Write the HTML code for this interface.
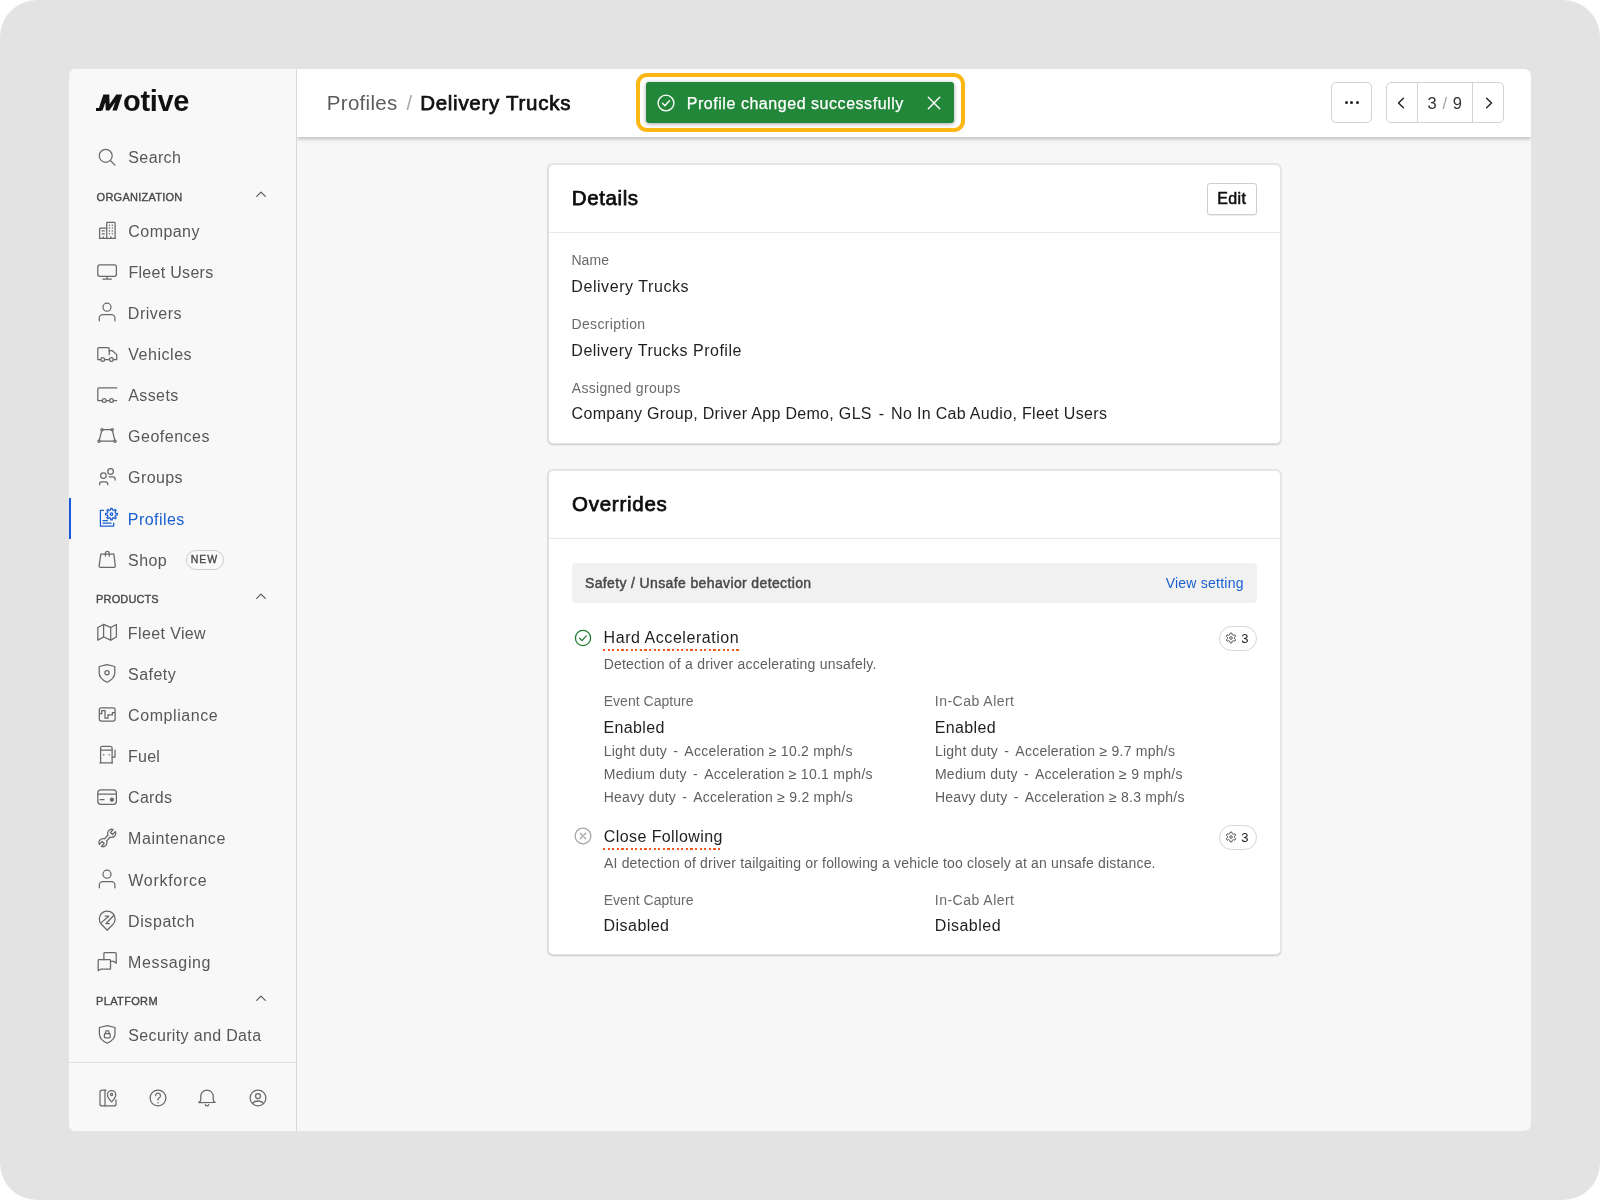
<!DOCTYPE html>
<html lang="en">
<head>
<meta charset="utf-8">
<title>Profiles / Delivery Trucks</title>
<style>
*{box-sizing:border-box;margin:0;padding:0}
html,body{width:1600px;height:1200px;overflow:hidden;background:#fff}
body{font-family:"Liberation Sans",sans-serif;color:#1a1a1a;position:relative}
.outer{position:absolute;left:0;top:0;width:1600px;height:1200px;background:#e3e3e3;border-radius:37px}
.app{position:absolute;left:69px;top:69px;width:1462px;height:1062px;border-radius:7px;overflow:hidden;background:#f7f7f7;will-change:transform}
.sidebar{position:absolute;left:0;top:0;width:228px;height:1062px;background:#f8f8f8;border-right:1px solid #d9d9d9}
.t{position:absolute;white-space:nowrap;line-height:20px;height:20px}
.ws{word-spacing:2px}
.nav{font-size:16px;color:#575757}
.nav.act{color:#1a5fd0}
.sec{font-size:11px;color:#474747;-webkit-text-stroke:.35px #474747}
.newt{font-size:10.5px;color:#474747;-webkit-text-stroke:.35px #474747}
.ic{position:absolute;fill:none;stroke:#686868;stroke-width:1.25;stroke-linecap:round;stroke-linejoin:round}
.ic .dt{stroke-width:1.5}
.chev{position:absolute;width:12px;height:8px;fill:none;stroke:#555;stroke-width:1.15;stroke-linecap:round;stroke-linejoin:round}
.lm{position:absolute;left:-28.6px;top:2.2px;font-size:21.8px;line-height:34px;letter-spacing:0;transform:skewX(-18deg) scaleX(1.15);transform-origin:0 100%;-webkit-text-stroke:1.1px #111}
.foot{position:absolute;left:27.1px;top:38.9px;width:4.5px;height:3px;background:#111}
.logot{font-size:29px;line-height:34px;height:34px;font-weight:700;color:#111}
.actbar{position:absolute;left:0;top:429.3px;width:1.6px;height:41.2px;background:#1659dc}
.newb{position:absolute;left:117px;top:481px;width:38px;height:20px;border:1px solid #cdcdcd;border-radius:10px;background:#fafafa}
.sbhr{position:absolute;left:0;top:993px;width:227px;height:1px;background:#e2e2e2}
.header{position:absolute;left:228px;top:0;width:1234px;height:68px;background:#fff;box-shadow:0 2px 3px rgba(0,0,0,.17),0 3px 6px rgba(0,0,0,.07);clip-path:inset(0 0 -12px 0)}
.bc1{font-size:20.5px;color:#5c5c5c;line-height:24px;height:24px}
.bcs{font-size:20px;color:#a8a8a8;line-height:24px;height:24px}
.bc2{font-size:20.5px;color:#111;-webkit-text-stroke:.75px #111;line-height:24px;height:24px}
.toastring{position:absolute;left:338.5px;top:4.3px;width:329px;height:59.2px;border:4px solid #fdb714;border-radius:11px}
.toast{position:absolute;left:348.6px;top:13px;width:308.8px;height:41px;background:#23873a;border-radius:3px;box-shadow:0 1px 4px rgba(0,0,0,.35)}
.tchk{position:absolute;left:10.5px;top:10.8px;width:20px;height:20px;fill:none;stroke:#fff;stroke-width:1.4;stroke-linecap:round;stroke-linejoin:round}
.ttxt{font-size:16px;color:#fff;-webkit-text-stroke:.25px #fff}
.tx{position:absolute;left:281px;top:13.5px;width:14px;height:14px;fill:none;stroke:#fff;stroke-width:1.6;stroke-linecap:round}
.hbtn{position:absolute;top:13px;height:41.3px;border:1px solid #d2d2d2;border-radius:5px;background:#fff}
.dot3{position:absolute;top:17.8px;width:3px;height:3px;border-radius:50%;background:#222}
.pch{position:absolute;top:12.8px;width:10px;height:14px;fill:none;stroke:#222;stroke-width:1.4;stroke-linecap:round;stroke-linejoin:round}
.pdiv{position:absolute;top:0;width:1px;height:39.3px;background:#d2d2d2}
.pgt{font-size:16.5px;color:#333;text-align:center;letter-spacing:.55px}
.psl{color:#a0a0a0}
.main{position:absolute;left:228px;top:68px;width:1234px;height:994px}
.card{position:absolute;background:#fff;border:1px solid #e3e3e3;border-radius:5px;box-shadow:-.5px -.5px 1px rgba(0,0,0,.07),0 1px 2px rgba(0,0,0,.2)}
.hr{position:absolute;height:1px;background:#e8e8e8}
.h2{font-size:20.5px;color:#0d0d0d;-webkit-text-stroke:.75px #0d0d0d;line-height:24px;height:24px}
.editb{position:absolute;left:910px;top:46px;width:50px;height:32px;border:1px solid #cdcdcd;border-radius:3px;background:#fff;box-shadow:0 1px 1px rgba(0,0,0,.08)}
.edt{font-size:16px;color:#111;-webkit-text-stroke:.55px #111}
.lbl{font-size:14px;color:#6a6a6a}
.val{font-size:16px;color:#1f1f1f}
.sm{font-size:14px;color:#5f5f5f}
.dsc{font-size:14px;color:#5f5f5f}
.b3{font-size:13px;color:#1a1a1a}
.banner{position:absolute;left:274.5px;top:425.5px;width:685.5px;height:40.5px;background:#f1f1f1;border-radius:4px}
.bnt{font-size:14px;color:#484848;-webkit-text-stroke:.45px #484848}
.lnk{font-size:14px;color:#1a5fd0}
.sti{position:absolute;width:20px;height:20px;fill:none;stroke-width:1.3;stroke-linecap:round;stroke-linejoin:round}
.dot{position:absolute;height:2px;margin-top:-1px;background:repeating-linear-gradient(90deg,#f4581f 0,#f4581f 2.2px,transparent 2.2px,transparent 4.6px)}
.badge{position:absolute;left:922px;width:38px;height:24.8px;border:1px solid #d6d6d6;border-radius:13px;background:#fff}
.badge .gear{position:absolute;left:5px;top:5.3px;width:12px;height:12px;fill:none;stroke:#3c3c3c;stroke-width:.85;stroke-linejoin:round}
</style>
</head>
<body>
<div class="outer"></div>
<div class="app">
<div class="sidebar">
<div class="foot"></div>
<svg class="ic" viewBox="0 0 24 24" style="left:26.3px;top:76.1px;width:24px;height:24px;"><circle cx="10.700" cy="10.800" r="6.500"/><path d="M15.400 15.500l4.600 4.600"/></svg>
<svg class="ic" viewBox="0 0 24 24" style="left:26.3px;top:149.6px;width:24px;height:24px;"><path d="M11.700 19.400V4.200a.8.8 0 0 1 .8-.8h6.800a.8.8 0 0 1 .8.800v15.200"/><path d="M4.600 19.400V9.950a.8.8 0 0 1 .8-.8h6.300"/><path d="M4.600 19.400h15.500"/><path class="dt" d="M14.400 6.150h.01M17.300 6.150h.01M14.400 9h.01M17.300 9h.01M14.400 11.900h.01M17.300 11.900h.01M14.400 14.800h.01M17.300 14.800h.01"/><path d="M7.200 11.900h2.100M7.200 14.800h2.100M8.250 17.800v1.600M15.900 17.600v1.800"/></svg>
<svg class="ic" viewBox="0 0 24 24" style="left:26.3px;top:190.7px;width:24px;height:24px;"><rect x="2.800" y="4.900" width="18.600" height="11.400" rx="2"/><path d="M12.100 16.300v2.800M7.900 19.100h8.500"/></svg>
<svg class="ic" viewBox="0 0 24 24" style="left:26.3px;top:231.9px;width:24px;height:24px;"><circle cx="12" cy="6.200" r="4"/><path d="M4.300 19.800v-2.600a3.500 3.500 0 0 1 3.500-3.500h8.600a3.500 3.500 0 0 1 3.500 3.500v2.600"/></svg>
<svg class="ic" viewBox="0 0 24 24" style="left:26.3px;top:273px;width:24px;height:24px;"><path d="M5.800 17.700H2.800V6.700a1.200 1.200 0 0 1 1.200-1.200h9a1.200 1.200 0 0 1 1.200 1.200V12.500"/><path d="M14.200 8.700h3.300l4.200 3.900v5.100h-3.400"/><path d="M9.600 17.700h4.900"/><circle cx="7.700" cy="17.400" r="1.900"/><circle cx="16.400" cy="17.400" r="1.900"/></svg>
<svg class="ic" viewBox="0 0 24 24" style="left:26.3px;top:314.2px;width:24px;height:24px;"><path d="M21.700 4.900H4a1.200 1.200 0 0 0-1.200 1.200V17.500h4.500"/><path d="M11.100 17.500h3.500M18.400 17.500h3.300"/><circle cx="9.200" cy="17.400" r="1.900"/><circle cx="16.500" cy="17.400" r="1.900"/></svg>
<svg class="ic" viewBox="0 0 24 24" style="left:26.3px;top:355.3px;width:24px;height:24px;"><path d="M8.200 5.700h7.800M17.500 6.900l2.200 9.100M18.800 17.200H5.200M4.300 16l2.400-9.100"/><circle cx="7" cy="5.700" r="1.200"/><circle cx="17.200" cy="5.700" r="1.200"/><circle cx="4" cy="17.200" r="1.200"/><circle cx="20" cy="17.200" r="1.200"/></svg>
<svg class="ic" viewBox="0 0 24 24" style="left:26.3px;top:396.4px;width:24px;height:24px;"><circle cx="8.400" cy="10.600" r="2.800"/><path d="M4.600 19.800v-.8a2.200 2.200 0 0 1 2.200-2.200h3.700a2.200 2.200 0 0 1 2.200 2.200v.8"/><circle cx="15.600" cy="6.500" r="2.800"/><path d="M14.200 11.800h3.600a2.400 2.400 0 0 1 2.400 2.400v.9"/></svg>
<svg class="ic" viewBox="0 0 24 24" style="left:26.3px;top:437.6px;width:24px;height:24px;stroke:#1a5fd0;"><path d="M8.400 3.400H5.400V19.100H18.700V16.100"/><path d="M8 13.500h4.400M8 16.200h8"/><path d="M15.52 3.02L15.76 1.25L17.24 1.25L17.48 3.02L18.69 3.52L20.12 2.44L21.16 3.48L20.08 4.91L20.58 6.12L22.35 6.36L22.35 7.84L20.58 8.08L20.08 9.29L21.16 10.72L20.12 11.76L18.69 10.68L17.48 11.18L17.24 12.95L15.76 12.95L15.52 11.18L14.31 10.68L12.88 11.76L11.84 10.72L12.92 9.29L12.42 8.08L10.65 7.84L10.65 6.36L12.42 6.12L12.92 4.91L11.84 3.48L12.88 2.44L14.31 3.52Z"/><circle cx="16.5" cy="7.1" r="1.3"/></svg>
<svg class="ic" viewBox="0 0 24 24" style="left:26.3px;top:478.7px;width:24px;height:24px;"><path d="M6.700 6h11.300a1 1 0 0 1 1 .9l1.300 11.200a1.100 1.100 0 0 1-1.100 1.200H5.200a1.100 1.100 0 0 1-1.100-1.200L5.700 6.900a1 1 0 0 1 1-.9z"/><path d="M10.400 8V5.200a1.900 1.900 0 0 1 3.800 0V8"/></svg>
<svg class="ic" viewBox="0 0 24 24" style="left:26.3px;top:551.85px;width:24px;height:24px;"><path d="M2.800 6.450L8.600 3.450L15.700 6.450L21.400 3.450V16.050L15.700 19.150L8.600 16.050L2.800 19.150Z"/><path d="M8.600 3.450V16.050M15.700 6.450V19.150"/></svg>
<svg class="ic" viewBox="0 0 24 24" style="left:26.3px;top:593px;width:24px;height:24px;"><path d="M12 2.600L19.800 4.500V10.800c0 4.700-3.400 7.500-7.800 9.500c-4.400-2-7.800-4.800-7.800-9.500V4.500Z"/><circle cx="12" cy="10.700" r="2.100"/></svg>
<svg class="ic" viewBox="0 0 24 24" style="left:26.3px;top:634.1px;width:24px;height:24px;"><rect x="4.300" y="4.800" width="15.800" height="13.200" rx="2"/><path d="M4.600 10.600H6.700V7.600H10V15.200H13V11.900H17.400V9.600H20" stroke-linejoin="miter" stroke-linecap="butt"/></svg>
<svg class="ic" viewBox="0 0 24 24" style="left:26.3px;top:675.3px;width:24px;height:24px;"><path d="M5.600 18.800V4.100a1.800 1.800 0 0 1 1.800-1.800h7.900a1.800 1.800 0 0 1 1.800 1.800V18.800"/><path d="M5 18.800h12.400M5.600 6h11.500"/><path d="M17.100 13H20V6"/><path class="dt" d="M8.700 10.700h.01M14.200 10.700h.01"/></svg>
<svg class="ic" viewBox="0 0 24 24" style="left:26.3px;top:716.4px;width:24px;height:24px;"><rect x="2.800" y="4.800" width="18.600" height="14.500" rx="3"/><path d="M2.800 9h18.600M5 14.700h4"/><circle cx="16.900" cy="14.700" r="1.500" style="fill:#6a6a6a"/></svg>
<svg class="ic" viewBox="0 0 24 24" style="left:26.3px;top:757.55px;width:24px;height:24px;"><path d="M13.04 8.01A4.0 4.0 0 0 1 18.15 2.60L15.40 5.55L17.52 7.53L20.27 4.58A4.0 4.0 0 0 1 15.23 10.05L11.56 13.99A4.0 4.0 0 0 1 6.45 19.40L9.20 16.45L7.08 14.47L4.33 17.42A4.0 4.0 0 0 1 9.37 11.95Z"/></svg>
<svg class="ic" viewBox="0 0 24 24" style="left:26.3px;top:798.7px;width:24px;height:24px;"><circle cx="12" cy="6.200" r="4"/><path d="M4.300 19.800v-2.600a3.500 3.500 0 0 1 3.500-3.500h8.600a3.500 3.500 0 0 1 3.500 3.500v2.600"/></svg>
<svg class="ic" viewBox="0 0 24 24" style="left:26.3px;top:839.8px;width:24px;height:24px;"><path d="M12.200 21.200L6.400 15.300A7.900 7.900 0 1 1 18 15.300Z"/><path d="M6 13.900L13.700 7.200H10.200M19 6.200L11 14.500H14.400"/></svg>
<svg class="ic" viewBox="0 0 24 24" style="left:26.3px;top:881px;width:24px;height:24px;"><path d="M8.900 9.700V3.500a.8.8 0 0 1 .8-.8h10.700a.8.8 0 0 1 .8.800V13.300l-2.600-2h-3.100"/><path d="M3.200 20.800V10.500a.8.8 0 0 1 .8-.8h10.700a.8.8 0 0 1 .8.800v7.900a.8.800 0 0 1-.8.800H5.600z"/></svg>
<svg class="ic" viewBox="0 0 24 24" style="left:26.3px;top:953.7px;width:24px;height:24px;"><path d="M12.200 2.600L20 4.500V10.800c0 4.700-3.400 7.500-7.800 9.500c-4.400-2-7.800-4.800-7.800-9.500V4.500Z"/><rect x="9.400" y="10.700" width="5.800" height="4.100" rx=".8"/><path d="M10.600 10.700V9.200a1.700 1.700 0 0 1 3.400 0v1.500"/></svg>
<svg class="chev" viewBox="0 0 12 8" style="left:185.7px;top:121px"><path d="M1.700 6.400l4.300-4.300 4.300 4.300"/></svg>
<svg class="chev" viewBox="0 0 12 8" style="left:185.7px;top:523px"><path d="M1.700 6.400l4.300-4.300 4.300 4.300"/></svg>
<svg class="chev" viewBox="0 0 12 8" style="left:185.7px;top:925.1px"><path d="M1.700 6.400l4.300-4.300 4.300 4.300"/></svg>
<div class="actbar"></div>
<div class="newb"></div>
<div class="sbhr"></div>
<svg class="ic" viewBox="0 0 24 24" style="left:26.5px;top:1016.9px;width:24px;height:24px;"><path d="M10 4.100H6a2 2 0 0 0-2 2v11.800a2 2 0 0 0 2 2h12a2 2 0 0 0 2-2V13.900"/><path d="M9 4.100V19.900"/><path d="M15.600 15.900c-2.500-2.600-4.100-4.600-4.100-7.200a4.100 4.100 0 0 1 8.200 0c0 2.600-1.600 4.600-4.100 7.200z"/><circle cx="15.600" cy="8.500" r="1.100"/></svg>
<svg class="ic" viewBox="0 0 24 24" style="left:76.7px;top:1016.9px;width:24px;height:24px;"><circle cx="12" cy="12" r="7.900"/><path d="M9.500 9.700a2.500 2.500 0 1 1 3.800 2.100c-.8.500-1.300 1-1.300 1.900v.4"/><path class="dt" d="M12 16.700h.01"/></svg>
<svg class="ic" viewBox="0 0 24 24" style="left:126.1px;top:1016.9px;width:24px;height:24px;"><path d="M3.800 16.500c1.300-.7 2-1.700 2-3.300v-2.900a6.200 6.200 0 0 1 12.400 0v2.900c0 1.600.7 2.600 2 3.300z"/><path d="M10.300 18.700a1.800 1.800 0 0 0 3.400 0"/></svg>
<svg class="ic" viewBox="0 0 24 24" style="left:176.5px;top:1016.9px;width:24px;height:24px;"><circle cx="12" cy="12" r="7.900"/><circle cx="12" cy="10" r="2.500"/><path d="M6.700 17.400c1.100-1.700 2.800-2.400 5.300-2.400s4.200.7 5.300 2.400"/></svg>
<div class="t nav" style="left:59.33px;top:79.00px;letter-spacing:0.371px;">Search</div>
<div class="t nav" style="left:59.37px;top:152.50px;letter-spacing:0.432px;">Company</div>
<div class="t nav" style="left:59.44px;top:193.60px;letter-spacing:0.298px;">Fleet Users</div>
<div class="t nav" style="left:58.84px;top:234.80px;letter-spacing:0.497px;">Drivers</div>
<div class="t nav" style="left:59.27px;top:275.90px;letter-spacing:0.533px;">Vehicles</div>
<div class="t nav" style="left:59.31px;top:317.10px;letter-spacing:0.381px;">Assets</div>
<div class="t nav" style="left:59.12px;top:358.20px;letter-spacing:0.504px;">Geofences</div>
<div class="t nav" style="left:59.12px;top:399.30px;letter-spacing:0.376px;">Groups</div>
<div class="t nav act" style="left:58.84px;top:440.50px;letter-spacing:0.437px;">Profiles</div>
<div class="t nav" style="left:59.08px;top:481.60px;letter-spacing:0.424px;">Shop</div>
<div class="t nav" style="left:58.84px;top:554.75px;letter-spacing:0.382px;">Fleet View</div>
<div class="t nav" style="left:59.08px;top:595.90px;letter-spacing:0.445px;">Safety</div>
<div class="t nav" style="left:59.12px;top:637.00px;letter-spacing:0.557px;">Compliance</div>
<div class="t nav" style="left:59.09px;top:678.20px;letter-spacing:0.238px;">Fuel</div>
<div class="t nav" style="left:59.12px;top:719.30px;letter-spacing:0.276px;">Cards</div>
<div class="t nav" style="left:59.09px;top:760.45px;letter-spacing:0.562px;">Maintenance</div>
<div class="t nav" style="left:59.31px;top:801.60px;letter-spacing:0.706px;">Workforce</div>
<div class="t nav" style="left:59.09px;top:842.70px;letter-spacing:0.573px;">Dispatch</div>
<div class="t nav" style="left:59.09px;top:883.90px;letter-spacing:0.633px;">Messaging</div>
<div class="t nav" style="left:59.33px;top:956.60px;letter-spacing:0.345px;">Security and Data</div>
<div class="t sec" style="left:27.62px;top:118.30px;letter-spacing:0.241px;">ORGANIZATION</div>
<div class="t sec" style="left:27.11px;top:520.30px;letter-spacing:0.122px;">PRODUCTS</div>
<div class="t sec" style="left:27.11px;top:922.40px;letter-spacing:0.339px;">PLATFORM</div>
<div class="t newt" style="left:121.84px;top:480.10px;letter-spacing:0.955px;">NEW</div>
<div class="t logot" style="left:54.05px;top:14.90px;letter-spacing:-0.354px;"><span class="lm">M</span>otive</div>
</div>
<div class="header">
<div class="t bcs" style="left:109.500px;top:21.500px">/</div>
<div class="toastring"></div>
<div class="toast"><svg viewBox="0 0 20 20" class="tchk"><circle cx="10" cy="10" r="7.900"/><path d="M6.500 10.300l2.400 2.400 4.500-4.900"/></svg><svg viewBox="0 0 16 16" class="tx"><path d="M1.500 1.500l13 13M14.500 1.500l-13 13"/></svg></div>
<div class="hbtn" style="left:1034px;width:41px"><i class="dot3" style="left:12.600px"></i><i class="dot3" style="left:18.200px"></i><i class="dot3" style="left:23.800px"></i></div>
<div class="hbtn" style="left:1089px;width:118px"><svg class="pch" viewBox="0 0 10 14" style="left:9.100px"><path d="M7.400 2.200l-4.900 4.800 4.900 4.800"/></svg><div class="pdiv" style="left:30px"></div><div class="t pgt" style="left:31px;width:54px;top:10px">3<span class="psl"> / </span>9</div><div class="pdiv" style="left:85px"></div><svg class="pch" viewBox="0 0 10 14" style="left:96.500px"><path d="M2.600 2.200l4.900 4.800-4.900 4.800"/></svg></div>
<div class="t bc1" style="left:29.81px;top:22.00px;letter-spacing:0.293px;">Profiles</div>
<div class="t bc2" style="left:123.21px;top:22.00px;letter-spacing:0.719px;">Delivery Trucks</div>
<div class="t ttxt" style="left:389.74px;top:25.00px;letter-spacing:0.543px;">Profile changed successfully</div>
</div>
<div class="main">
<div class="card" style="left:251px;top:27px;width:733px;height:280px"></div>
<div class="hr" style="left:252px;width:731px;top:95px"></div>
<div class="editb"></div>
<div class="card" style="left:251px;top:333px;width:733px;height:485px"></div>
<div class="hr" style="left:252px;width:731px;top:401px"></div>
<div class="banner"></div>
<svg class="sti" viewBox="0 0 20 20" style="left:275.6px;top:490.65px;stroke:#1e7e34"><circle cx="10" cy="10" r="7.600"/><path d="M6.600 10.300l2.300 2.300 4.400-4.700"/></svg>
<div class="dot" style="left:306px;top:512.85px;width:136.25px"></div>
<div class="badge" style="top:489.1px"><svg viewBox="0 0 12 12" class="gear"><path d="M4.89 2.58L5.17 1.07L6.83 1.07L7.11 2.58L8.41 3.32L9.85 2.81L10.69 4.26L9.52 5.25L9.52 6.75L10.69 7.74L9.85 9.19L8.41 8.68L7.11 9.42L6.83 10.93L5.17 10.93L4.89 9.42L3.59 8.68L2.15 9.19L1.31 7.74L2.48 6.75L2.48 5.25L1.31 4.26L2.15 2.81L3.59 3.32Z"/><circle cx="6" cy="6" r="1.3"/></svg></div>
<svg class="sti" viewBox="0 0 20 20" style="left:275.6px;top:689.4px;stroke:#a6a6a6"><circle cx="10" cy="10" r="7.850"/><path d="M7.300 7.300l5.400 5.400M12.700 7.300l-5.400 5.400"/></svg>
<div class="dot" style="left:306px;top:711.6px;width:119px"></div>
<div class="badge" style="top:687.85px"><svg viewBox="0 0 12 12" class="gear"><path d="M4.89 2.58L5.17 1.07L6.83 1.07L7.11 2.58L8.41 3.32L9.85 2.81L10.69 4.26L9.52 5.25L9.52 6.75L10.69 7.74L9.85 9.19L8.41 8.68L7.11 9.42L6.83 10.93L5.17 10.93L4.89 9.42L3.59 8.68L2.15 9.19L1.31 7.74L2.48 6.75L2.48 5.25L1.31 4.26L2.15 2.81L3.59 3.32Z"/><circle cx="6" cy="6" r="1.3"/></svg></div>
<div class="t h2" style="left:274.76px;top:49.00px;letter-spacing:0.614px;">Details</div>
<div class="t edt" style="left:920.24px;top:52.40px;letter-spacing:0.392px;">Edit</div>
<div class="t lbl" style="left:274.45px;top:113.10px;letter-spacing:0.068px;">Name</div>
<div class="t val" style="left:274.34px;top:139.75px;letter-spacing:0.558px;">Delivery Trucks</div>
<div class="t lbl" style="left:274.45px;top:177.25px;letter-spacing:0.364px;">Description</div>
<div class="t val" style="left:274.34px;top:203.50px;letter-spacing:0.493px;">Delivery Trucks Profile</div>
<div class="t lbl" style="left:274.78px;top:241.00px;letter-spacing:0.291px;">Assigned groups</div>
<div class="t val" style="left:274.62px;top:267.25px;letter-spacing:0.321px;">Company Group, Driver App Demo, GLS<span class="ws"> - </span>No In Cab Audio, Fleet Users</div>
<div class="t h2" style="left:275.07px;top:355.10px;letter-spacing:0.733px;">Overrides</div>
<div class="t bnt" style="left:287.96px;top:436.00px;letter-spacing:0.368px;">Safety / Unsafe behavior detection</div>
<div class="t lnk" style="left:868.68px;top:436.10px;letter-spacing:0.234px;">View setting</div>
<div class="t val" style="left:306.59px;top:491.25px;letter-spacing:0.550px;">Hard Acceleration</div>
<div class="t b3" style="left:944.21px;top:492.10px;">3</div>
<div class="t dsc" style="left:306.70px;top:517.25px;letter-spacing:0.214px;">Detection of a driver accelerating unsafely.</div>
<div class="t lbl" style="left:306.70px;top:553.75px;letter-spacing:0.024px;">Event Capture</div>
<div class="t lbl" style="left:637.84px;top:553.75px;letter-spacing:0.478px;">In-Cab Alert</div>
<div class="t val" style="left:306.59px;top:580.50px;letter-spacing:0.349px;">Enabled</div>
<div class="t val" style="left:637.84px;top:580.50px;letter-spacing:0.349px;">Enabled</div>
<div class="t sm" style="left:306.70px;top:604.25px;letter-spacing:0.267px;">Light duty<span class="ws"> - </span>Acceleration ≥ 10.2 mph/s</div>
<div class="t sm" style="left:306.70px;top:627.25px;letter-spacing:0.277px;">Medium duty<span class="ws"> - </span>Acceleration ≥ 10.1 mph/s</div>
<div class="t sm" style="left:306.70px;top:650.00px;letter-spacing:0.237px;">Heavy duty<span class="ws"> - </span>Acceleration ≥ 9.2 mph/s</div>
<div class="t sm" style="left:637.95px;top:604.25px;letter-spacing:0.247px;">Light duty<span class="ws"> - </span>Acceleration ≥ 9.7 mph/s</div>
<div class="t sm" style="left:637.95px;top:627.25px;letter-spacing:0.246px;">Medium duty<span class="ws"> - </span>Acceleration ≥ 9 mph/s</div>
<div class="t sm" style="left:637.95px;top:650.00px;letter-spacing:0.251px;">Heavy duty<span class="ws"> - </span>Acceleration ≥ 8.3 mph/s</div>
<div class="t val" style="left:306.87px;top:690.00px;letter-spacing:0.403px;">Close Following</div>
<div class="t b3" style="left:944.21px;top:690.85px;">3</div>
<div class="t dsc" style="left:307.03px;top:716.00px;letter-spacing:0.168px;">AI detection of driver tailgaiting or following a vehicle too closely at an unsafe distance.</div>
<div class="t lbl" style="left:306.70px;top:752.50px;letter-spacing:0.024px;">Event Capture</div>
<div class="t lbl" style="left:637.84px;top:752.50px;letter-spacing:0.478px;">In-Cab Alert</div>
<div class="t val" style="left:306.59px;top:779.25px;letter-spacing:0.451px;">Disabled</div>
<div class="t val" style="left:637.84px;top:779.25px;letter-spacing:0.501px;">Disabled</div>
</div>
</div>
</body>
</html>
